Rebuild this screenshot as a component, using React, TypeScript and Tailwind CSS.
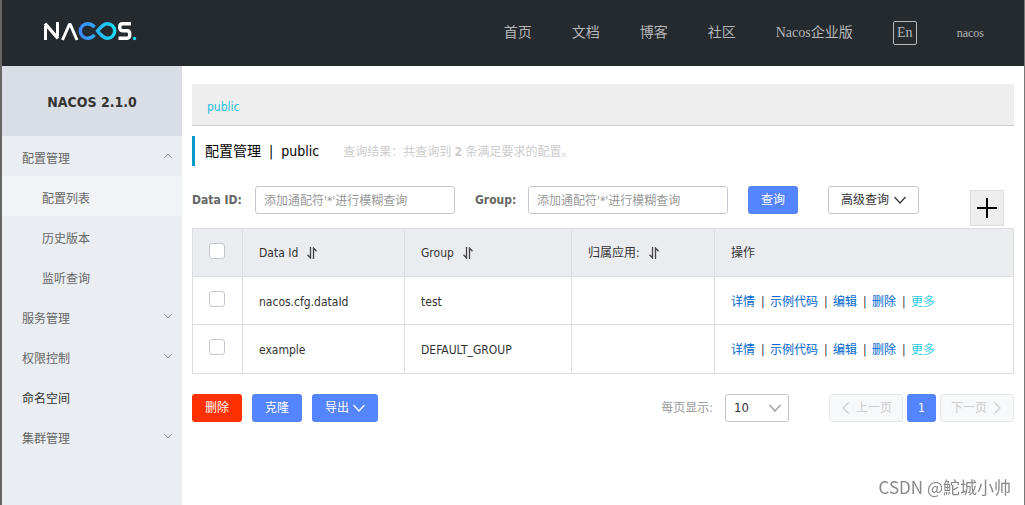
import React from "react";

const cell = "border border-[#dcdee3] px-4 text-left font-normal";
const primaryButton =
  "flex h-7 items-center rounded-[3px] bg-[#5584ff] px-[13px] text-white";
const pagerButton =
  "flex h-7 items-center gap-1 rounded-[3px] border border-[#e6e7eb] bg-[#f7f8fa] px-2.5 text-[#ccc]";

type IconProps = { d: string; className?: string };

const Stroke: React.FC<IconProps> = ({ d, className = "size-3" }) => (
  <svg
    viewBox="0 0 12 12"
    className={`${className} shrink-0`}
    fill="none"
    stroke="currentColor"
    strokeWidth="1.2"
    aria-hidden="true"
  >
    <path d={d} />
  </svg>
);

const DOWN = "M.5 3 6 9l5.500-6";
const UP = "M.5 9 6 3l5.500 6";
const LEFT = "M8.500.5 3 6l5.500 5.500";
const RIGHT = "M3.500.5 9 6l-5.500 5.500";

const SortIcon = () => (
  <svg viewBox="0 0 12 12" className="size-3" fill="none" stroke="#444" strokeWidth="1.3" aria-hidden="true">
    <path d="M4.5 0v11L1.500 7.800M7.500 12V1l3 3.200" />
  </svg>
);

const Logo = () => (
  <svg viewBox="0 0 96 20" className="h-5 w-24" fill="none" strokeWidth="3.4" role="img" aria-label="Nacos">
    <defs>
      <linearGradient id="loop" gradientUnits="userSpaceOnUse" x1="37" y1="0" x2="75" y2="0">
        <stop offset="0" stopColor="#3f83ff" />
        <stop offset="1" stopColor="#16e0f5" />
      </linearGradient>
    </defs>
    <g stroke="#fff">
      <path d="M4.500 19V5M16.500 1v14" strokeWidth="3" />
      <path d="M4 2.500 17 17.500" />
      <path d="M21.500 19 28.300 3.500h1L36 19" strokeWidth="3" strokeLinejoin="round" />
      <path d="M90 2.800H81.500Q78.700 2.800 78.700 6.200T81.500 9.800H86Q88.800 9.800 88.800 13.500T86 17.200H77.500" />
    </g>
    <g stroke="url(#loop)">
      <path d="M53.500 6.200C51.500 3.800 49 2.800 46.500 2.800a7.200 7.200 0 0 0 0 14.400C49 17.200 51.500 16.200 53.500 13.800" />
      <path d="M56.500 10C60 6 62.500 2.800 66.500 2.800a7.200 7.200 0 0 1 0 14.400C62.500 17.200 60 14 56.500 10Z" />
    </g>
    <circle cx="93.500" cy="17.500" r="1.700" fill="#16e0f5" />
  </svg>
);

const navItems = ["首页", "文档", "博客", "社区", "Nacos企业版"];

const menu = [
  { label: "配置管理", icon: UP },
  { label: "配置列表", child: true, active: true },
  { label: "历史版本", child: true },
  { label: "监听查询", child: true },
  { label: "服务管理", icon: DOWN },
  { label: "权限控制", icon: DOWN },
  { label: "命名空间", dark: true },
  { label: "集群管理", icon: DOWN },
];

const rows = [
  { dataId: "nacos.cfg.dataId", group: "test" },
  { dataId: "example", group: "DEFAULT_GROUP" },
];

const Header = () => (
  <header className="flex h-[66px] items-center justify-between bg-[#252a2f] pr-10 pl-[39px] font-['Liberation_Serif','Noto_Sans_CJK_SC',serif] text-sm text-[#b5b7b9]">
    <a href="#home" className="-mt-1">
      <Logo />
    </a>
    <nav className="flex items-center gap-10">
      {navItems.map((item) => (
        <a key={item} href="#nav">
          {item}
        </a>
      ))}
      <button className="h-6 w-6 rounded-[2px] border border-[#b5b7b9] leading-5">En</button>
      <a href="#user" className="text-xs">
        nacos
      </a>
    </nav>
  </header>
);

const Sidebar = () => (
  <aside className="w-[180px] shrink-0 bg-[#eaedf1]">
    <h1 className="flex h-[70px] items-center justify-center bg-[#d9dde4] pt-0.5 text-sm font-bold text-[#333]">
      NACOS 2.1.0
    </h1>
    <ul>
      {menu.map(({ label, icon, child, active, dark }) => (
        <li key={label} className={active ? "bg-[#f2f3f7]" : ""}>
          <a
            href="#menu"
            className={`flex h-10 items-center justify-between pt-1.5 pr-2.5 ${child ? "pl-10" : "pl-5"} ${dark ? "text-[#333]" : "text-[#666]"}`}
          >
            {label}
            {icon && <Stroke d={icon} className="mb-1.5 size-2 text-[#777]" />}
          </a>
        </li>
      ))}
    </ul>
  </aside>
);

const SearchForm = () => (
  <form className="flex h-[42px] items-start" onSubmit={(e) => e.preventDefault()}>
    <label htmlFor="dataId" className="w-[63px] leading-7 font-bold text-[#666]">
      Data ID:
    </label>
    <input
      id="dataId"
      placeholder="添加通配符'*'进行模糊查询"
      className="mr-5 h-7 w-[200px] rounded-[3px] border border-[#c4c6cf] px-2 pt-0.5 placeholder:text-[#999]"
    />
    <label htmlFor="group" className="w-[53px] leading-7 font-bold text-[#666]">
      Group:
    </label>
    <input
      id="group"
      placeholder="添加通配符'*'进行模糊查询"
      className="mr-5 h-7 w-[200px] rounded-[3px] border border-[#c4c6cf] px-2 pt-0.5 placeholder:text-[#999]"
    />
    <button className={primaryButton}>查询</button>
    <button className="ml-[30px] flex h-7 items-center gap-[5px] rounded-[3px] border border-[#c4c6cf] px-3 text-[#333]">
      高级查询
      <Stroke d={DOWN} />
    </button>
    <button
      aria-label="新建配置"
      className="mt-1 mr-2.5 ml-auto flex h-9 w-[34px] items-center justify-center border border-[#ddd] bg-[#eee] text-black"
    >
      <svg viewBox="0 0 20 20" className="size-5" stroke="currentColor" strokeWidth="2" aria-hidden="true">
        <path d="M10 0v20M0 10h20" />
      </svg>
    </button>
  </form>
);

const Check = ({ label }: { label: string }) => (
  <input
    type="checkbox"
    aria-label={label}
    className="mb-1 block size-4 appearance-none rounded-[3px] border border-[#c4c6cf] bg-white"
  />
);

const ConfigTable = () => (
  <table className="w-full table-fixed border-collapse text-[#333]">
    <colgroup>
      <col className="w-[50px]" />
      <col className="w-[162px]" />
      <col className="w-[167px]" />
      <col className="w-[143px]" />
      <col />
    </colgroup>
    <thead>
      <tr className="h-12 bg-[#ebecf0]">
        <th className={cell}>
          <Check label="全选" />
        </th>
        {["Data Id", "Group", "归属应用:"].map((title) => (
          <th key={title} className={cell}>
            <span className="flex items-center gap-2">
              {title}
              <SortIcon />
            </span>
          </th>
        ))}
        <th className={cell}>操作</th>
      </tr>
    </thead>
    <tbody>
      {rows.map(({ dataId, group }) => (
        <tr key={dataId} className="h-12 last:h-[49px]">
          <td className={cell}>
            <Check label={dataId} />
          </td>
          <td className={`${cell} pt-0.5`}>{dataId}</td>
          <td className={`${cell} pt-0.5`}>{group}</td>
          <td className={cell} />
          <td className={`${cell} pt-0.5`}>
            <span className="flex gap-1.5">
              {["详情", "示例代码", "编辑", "删除"].map((action) => (
                <React.Fragment key={action}>
                  <a href="#action" className="text-[#06c]">
                    {action}
                  </a>
                  <span className="w-[3px]">|</span>
                </React.Fragment>
              ))}
              <a href="#more" className="text-[#33cde5]">
                更多
              </a>
            </span>
          </td>
        </tr>
      ))}
    </tbody>
  </table>
);

const Footer = () => (
  <div className="mt-5 flex items-center">
    <div className="flex gap-2.5">
      <button className="h-7 rounded-[3px] bg-[#ff3000] px-[13px] text-white">删除</button>
      <button className={primaryButton}>克隆</button>
      <button className={`${primaryButton} gap-1`}>
        导出
        <Stroke d={DOWN} />
      </button>
    </div>
    <label htmlFor="pageSize" className="ml-auto text-[#999]">
      每页显示:
    </label>
    <div className="relative ml-3 text-[13px] text-[#333]">
      <select id="pageSize" className="block h-7 w-16 appearance-none rounded-[3px] border border-[#c4c6cf] px-2">
        <option>10</option>
      </select>
      <span className="pointer-events-none absolute top-2 right-2 text-[#999]">
        <Stroke d={DOWN} />
      </span>
    </div>
    <div className="ml-10 flex gap-1">
      <button className={pagerButton} disabled>
        <Stroke d={LEFT} />
        上一页
      </button>
      <button className="h-7 w-[29px] rounded-[3px] bg-[#5584ff] text-white">1</button>
      <button className={pagerButton} disabled>
        下一页
        <Stroke d={RIGHT} />
      </button>
    </div>
  </div>
);

export default function App() {
  return (
    <div className="flex min-h-screen flex-col border-r border-l-2 border-r-[#777] border-l-[#666] bg-white font-['DejaVu_Sans_Condensed','Noto_Sans_CJK_SC',sans-serif] text-xs">
      <Header />
      <div className="flex flex-1">
        <Sidebar />
        <main className="min-w-0 flex-1 px-2.5 pt-[18px]">
          <div className="flex h-[42px] items-center border-b border-[#ccc] bg-[#eee] px-[15px] pt-1">
            <a href="#public" className="text-[#1fc0dd]">
              public
            </a>
          </div>
          <div className="mt-2.5 mb-5 flex h-[30px] items-center border-l-3 border-[#09c] pl-2.5">
            <h2 className="flex gap-2 text-sm text-black">
              <span>配置管理</span>
              <span>|</span>
              <span>public</span>
            </h2>
            <p className="ml-6 pt-0.5 text-[#ccc]">
              查询结果：共查询到 <b>2</b> 条满足要求的配置。
            </p>
          </div>
          <SearchForm />
          <ConfigTable />
          <Footer />
        </main>
      </div>
      <p className="fixed right-3.5 bottom-1.5 font-['Noto_Sans_CJK_SC',sans-serif] text-[17px] text-[#888]">
        CSDN @鮀城小帅
      </p>
    </div>
  );
}
